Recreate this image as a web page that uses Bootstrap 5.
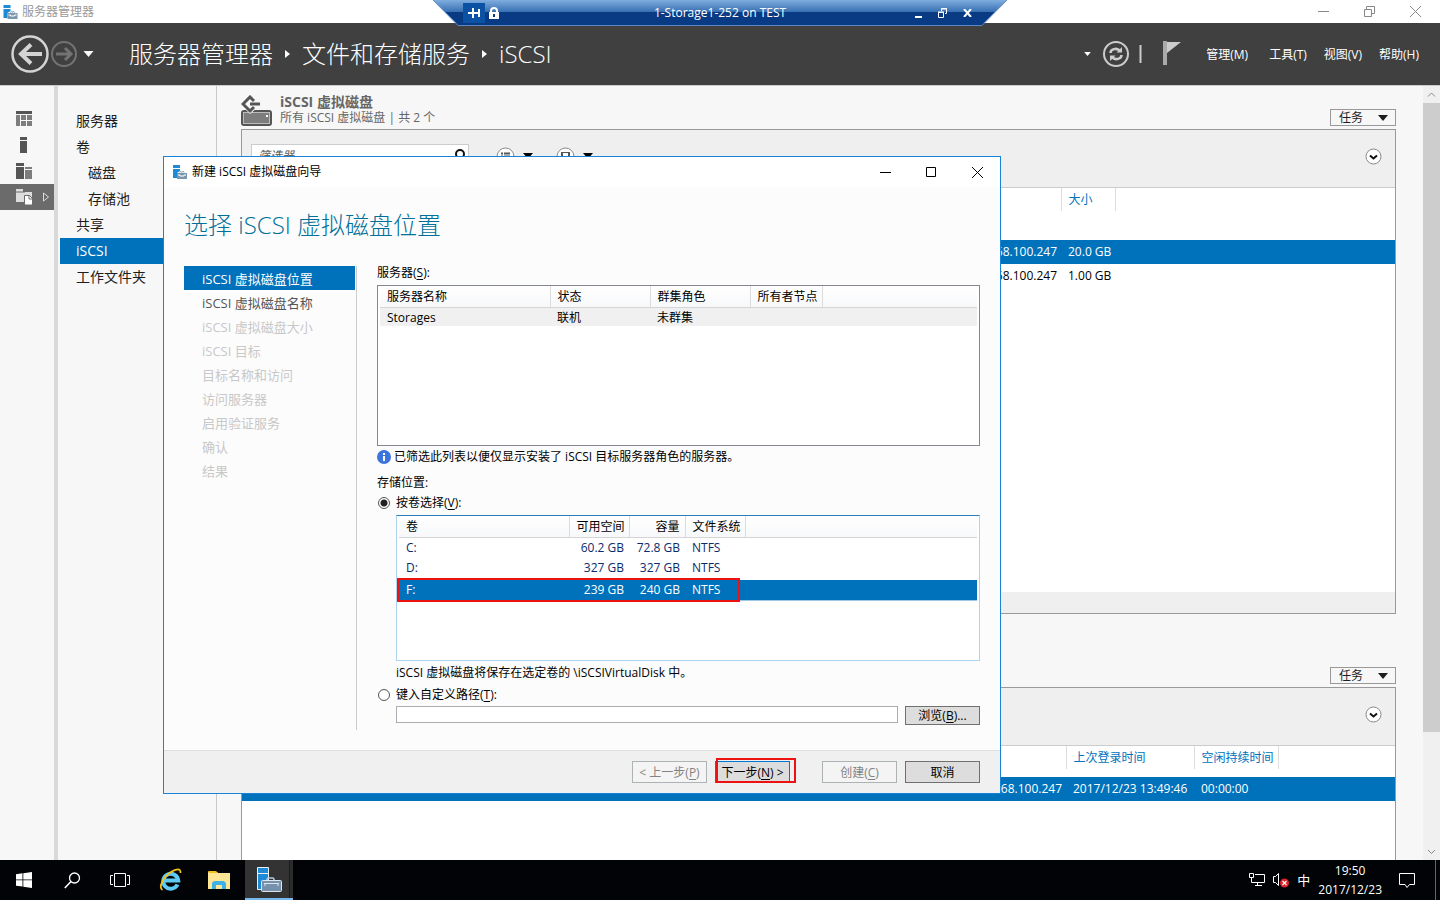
<!DOCTYPE html>
<html lang="zh-CN">
<head>
<meta charset="utf-8">
<meta name="viewport" content="width=device-width, initial-scale=1">
<title>服务器管理器</title>
<link href="https://cdn.jsdelivr.net/npm/bootstrap@5.3.0/dist/css/bootstrap.min.css" rel="stylesheet">
<style>
  :root { --accent: #0072bc; --tile-line: #999; --ink: #1e1e1e; }
  body { font: 12px/16px "Open Sans", "Noto Sans CJK SC", sans-serif; color: #000; background: #f7f7f7; }
  button { font: inherit; color: inherit; padding: 0; border: 0; background: none; border-radius: 0; }
  svg { display: block; flex: none; }
  u { text-underline-offset: 2px; }
  td, th { padding: 0; font-weight: 400; white-space: nowrap; }
  table { table-layout: fixed; width: 100%; }

  .win-btns { gap: 35px; }
  .app-title { height: 23px; background: #fff; color: #999; padding: 0 19px 0 3px; }
  .app-head { height: 62px; background: #404040; color: #fff; padding: 0 21px 0 11px; }
  .crumbs { font-size: 24px; line-height: 32px; font-weight: 300; gap: 11px; margin-left: 35px; }
  .crumbs a { color: #fff; text-decoration: none; }
  .head-rule { margin: 0 20px 0 10px; }
  .menus { gap: 17px; margin-left: 25px; padding-top: 2px; }

  .workspace { border-top: 1px solid #ccc; min-height: 0; overflow: hidden; }
  .rail { width: 58px; border-right: 4px solid #d9d9d9; padding-top: 20px; }
  .rail button { height: 26px; width: 54px; padding-left: 15px; gap: 8px; }
  .rail .current { background: #6b6b6b; }
  .side { width: 159px; padding: 22px 0 0 2px; border-right: 1px solid #c8c8c8; font-size: 14px; }
  .side a { display: block; line-height: 26px; padding-left: 16px; color: var(--ink); text-decoration: none; }
  .side .sub { padding-left: 28px; }
  .side .current { background: var(--accent); color: #fff; }
  .tiles { min-width: 0; padding: 0 27px 0 24px; }
  .tile-head { height: 43px; padding-bottom: 3px; color: #666; }
  .tile-head h2 { font-size: 14px; line-height: 17px; font-weight: 700; margin: 0; }
  .task-btn { width: 66px; height: 17px; border: 1px solid var(--tile-line); color: var(--ink); padding: 0 7px 0 8px; }
  .tile-box { border: 1px solid var(--tile-line); background: #fff; }
  .tile-tools { height: 58px; background: #efefef; border-bottom: 1px solid #ccc; padding: 0 13px 5px 9px; }
  .filter { width: 218px; height: 24px; border: 1px solid #ccc; background: #fff; padding: 0 3px 0 6px; }
  .filter input { font-size: 12px; font-style: italic; border: 0; outline: 0; width: 180px; padding: 0; }
  .filter input::placeholder { color: #555; }
  .tool { gap: 8px; margin-left: 27px; }
  .tool + .tool { margin-left: 23px; }
  .grid-list th { height: 23px; color: var(--accent); padding-left: 7px; border-right: 1px solid #ddd; }
  .grid-list td { height: 24px; padding-left: 7px; }
  .grid-list th:last-child { border-right: 0; }
  .grid-list td:first-child { text-align: right; padding-right: 4px; }
  .grid-list .gap td { height: 29px; }
  .grid-list .gap.short td { height: 8px; }
  .grid-list .picked { background: var(--accent); color: #fff; }
  .tile-one .grid-area { height: 404px; }
  .tile-two { margin-top: 30px; }
  .tile-foot { height: 21px; background: #efefef; }
  .vscroll { width: 17px; background: #f0f0f0; }
  .vscroll .thumb { height: 629px; background: #cdcdcd; }

  .remote-bar { width: 576px; height: 26px; top: 0; left: 50%; transform: translateX(-50%); color: #fff; z-index: 5; }
  .remote-bar > svg { position: absolute; inset: 0; }
  .remote-bar .bar-row { position: relative; height: 25px; padding: 0 36px 0 31px; }
  .remote-bar .host-name { padding-left: 26px; }
  .pin { width: 22px; height: 20px; background: #0b52a4; }

  .wizard { left: 163px; top: 156px; width: 838px; border: 1px solid #1883d7; background: #fcfcfc; z-index: 3; }
  .wiz-title { height: 30px; background: #fff; padding: 0 17px 0 8px; }
  .wizard h1 { font-size: 24px; line-height: 32px; font-weight: 300; color: #00709a; margin: 22px 20px 25px; }
  .wiz-body { padding: 0 20px; margin-bottom: 20px; gap: 20px; }
  .steps { width: 173px; border-right: 1px solid #ccc; padding-right: 1px; font-size: 13px; height: 464px; }
  .steps a { display: block; line-height: 27px; height: 24px; padding-left: 18px; color: #c8c8c8; text-decoration: none; }
  .steps .open { color: #555; }
  .steps .current { background: var(--accent); color: #fff; }
  .pane { min-width: 0; }
  .lbl { line-height: 14px; margin-bottom: 5px; }
  .listbox { border: 1px solid #828790; background: #fff; padding: 0 2px; height: 161px; }
  .listbox.vol { border-color: #abd5ee; border-top-color: #2f7cba; height: 146px; position: relative; }
  .listbox th { height: 21px; padding: 1px 5px 0 7px; border-right: 1px solid #dcdcdc; border-bottom: 1px solid #d5d5d5; background: linear-gradient(#fff, #f7f8fa); }
  .listbox th:last-child { border-right: 0; }
  .listbox td { padding: 0 5px 0 7px; height: 21px; line-height: 18px; }
  .host tbody tr { background: linear-gradient(#fff 1px, #f0f0f0 1px, #f0f0f0 19px, #fff 19px); }
  .vol tbody { color: #0b2a6b; }
  .vol .picked { background: var(--accent); color: #fff; border-top: 1px solid #fff; border-bottom: 1px solid #9cc7e6; }
  .mark-box { position: absolute; border: 2px solid #ed1111; pointer-events: none; }
  .mark-vol { left: 0; top: 62px; width: 343px; height: 24px; }
  .mark-next { left: 1px; top: -3px; width: 80px; height: 25px; }
  .info { height: 21px; gap: 3px; }
  .opt { gap: 6px; height: 16px; }
  .opt input { appearance: none; width: 12px; height: 12px; border: 1px solid #555; border-radius: 50%; background: #fff; margin: 0 0 0 1px; }
  .opt input:checked { background: radial-gradient(circle, #222 0 3px, #fff 4px); }
  .opt-path { margin-top: 6px; }
  .indent { margin-left: 19px; }
  .path-row { gap: 7px; margin-top: 3px; }
  .path-in { height: 17px; border: 1px solid #abadb3; background: #fff; padding: 0 4px; min-width: 0; border-radius: 0; }
  .w-btn { width: 75px; height: 22px; border: 1px solid #707070; background: #ddd; padding-top: 1px; }
  .w-btn.slim { height: 19px; }
  .w-btn:disabled { border-color: #adb2b5; background: #f4f4f4; color: #838383; }
  .w-btn.main { border-color: #0078d7; }
  .wiz-foot { height: 43px; background: #f0f0f0; border-top: 1px solid #dfdfdf; padding: 0 20px; gap: 8px; }

  .taskbar { height: 40px; background: #010306; color: #fff; padding-right: 4px; }
  .taskbar .tb { width: 48px; height: 40px; }
  .taskbar .pinned { margin-left: 3px; }
  .taskbar .tb.active { background: linear-gradient(90deg, #333 44px, #1c1c1c 44px, #1c1c1c 45px, #2b2b2b 45px); border-bottom: 2px solid #76b9ed; margin-left: 2px; }
  .tray { border-right: 1px solid #666; padding-right: 20px; }
  .ime { font-size: 13px; }
  .clock { line-height: 19px; margin: 0 17px 0 8px; }
</style>
</head>
<body class="d-flex flex-column vh-100 overflow-hidden position-relative">

<svg width="0" height="0" class="position-absolute" aria-hidden="true">
  <symbol id="srv" viewBox="0 0 14 14">
    <path d="M0 0h7v3H0zM0 4h7v2L4 8v5H0z" fill="#1e8ad6"/>
    <path d="M4 8h2.500l1-2h3l1 2H14v6H4z" fill="#7a96ac"/><path d="M7.500 8l.5-1h2l.5 1M5 10h2v1h4v-1h2" stroke="#fff" fill="none"/>
  </symbol>
  <symbol id="down" viewBox="0 0 10 6"><path d="M0 0h10L5 6z" fill="currentColor"/></symbol>
  <symbol id="expander" viewBox="0 0 17 17"><circle cx="8.500" cy="8.500" r="7.500" fill="#fff" stroke="#888"/><path d="M5 7.500l3.500 3 3.500-3" fill="none" stroke="#111" stroke-width="2"/></symbol>
</svg>

<div class="remote-bar position-absolute">
  <svg width="576" height="26"><defs><linearGradient id="rb" x2="0" y2="1"><stop stop-color="#7fadde"/><stop offset=".46" stop-color="#3a72b4"/><stop offset=".47" stop-color="#083b84"/><stop offset="1" stop-color="#083b84"/></linearGradient></defs><path d="M1 0h574l-25 25H26z" fill="url(#rb)"/><path d="M1 0l25 25.500h524L575 0" fill="none" stroke="#5d8ac6"/></svg>
  <div class="bar-row d-flex align-items-center">
    <button class="pin d-flex align-items-center justify-content-center" aria-label="固定"><svg width="12" height="12" fill="#fff"><path d="M0 5h4v2H0zM4 1h2v4h4V2h2v8h-2V7H6v4H4z"/></svg></button>
    <svg width="10" height="12" class="ms-1"><path d="M2 6V4a3 3 0 016 0v2" fill="none" stroke="#fff" stroke-width="2"/><path d="M0 5h10v7H0z" fill="#fff"/><path d="M4 7h2v3H4z" fill="#083b84"/></svg>
    <span class="host-name flex-grow-1 text-center">1-Storage1-252 on TEST</span>
    <div class="d-flex align-items-center gap-3">
      <button aria-label="最小化"><svg width="7" height="10"><path d="M0 8h7v2H0z" fill="#fff"/></svg></button>
      <button aria-label="还原"><svg width="9" height="10" fill="none" stroke="#fff"><path d="M3.500 3V.5h5v5H7M3 1h6"/><path d="M.5 4.500h5v5h-5zM0 4h6"/></svg></button>
      <button aria-label="关闭"><svg width="9" height="8"><path d="M1 0l7 8M8 0L1 8" stroke="#fff" stroke-width="2"/></svg></button>
    </div>
  </div>
</div>

<div class="app-title d-flex align-items-center justify-content-between flex-shrink-0">
  <div class="d-flex align-items-center gap-1"><svg width="15" height="14"><use href="#srv"/></svg><span>服务器管理器</span></div>
  <div class="win-btns d-flex align-items-center">
    <button aria-label="最小化"><svg width="11" height="11"><path d="M0 5.500h11" stroke="#888"/></svg></button>
    <button aria-label="还原"><svg width="11" height="11" fill="none" stroke="#888"><path d="M.5 3.500h7v7h-7zM2.500 3V.5h8v7H8"/></svg></button>
    <button aria-label="关闭"><svg width="11" height="11"><path d="M0 0l11 11M11 0L0 11" stroke="#888"/></svg></button>
  </div>
</div>

<header class="app-head d-flex align-items-center flex-shrink-0">
  <button aria-label="后退"><svg width="38" height="38" fill="none"><circle cx="19" cy="19" r="17.500" stroke="#d4d4d4" stroke-width="2.500"/><path d="M31 19H10M20 9.500L10 19l10 9.500" stroke="#d4d4d4" stroke-width="4"/></svg></button>
  <button aria-label="前进"><svg width="30" height="26" fill="none" stroke="#737373"><circle cx="15" cy="13" r="12" stroke-width="2"/><path d="M7 13h15M16 7l6 6-6 6" stroke-width="3"/></svg></button>
  <button class="ms-1" aria-label="历史记录"><svg width="11" height="6" class="text-light"><use href="#down"/></svg></button>
  <nav class="crumbs d-flex align-items-center">
    <a href="#">服务器管理器</a>
    <svg width="7" height="8"><path d="M1 0l5 4-5 4z" fill="#fff"/></svg>
    <a href="#">文件和存储服务</a>
    <svg width="7" height="8"><path d="M1 0l5 4-5 4z" fill="#fff"/></svg>
    <a href="#">iSCSI</a>
  </nav>
  <div class="ms-auto d-flex align-items-center">
    <svg width="7" height="4"><use href="#down"/></svg>
    <button class="ms-2 ps-1" aria-label="刷新"><svg width="26" height="26" fill="none" stroke="#ccc" stroke-width="2"><circle cx="13" cy="13" r="12"/><path d="M7.500 12c0-4 6-5.500 9-2.500M18.500 14c0 4-6 5.500-9 2.500" stroke-width="2.500"/><path d="M19 6v5.500h-5.500zM7 20v-5.500h5.500z" fill="#ccc" stroke="none"/></svg></button>
    <svg width="3" height="18" class="head-rule"><path d="M1.500 0v18" stroke="#ccc" stroke-width="2"/></svg>
    <button class="pb-1" aria-label="通知"><svg width="19" height="25"><path d="M3 1v24" stroke="#aaa" stroke-width="4"/><path d="M5 2h14L5 13z" fill="#ccc"/></svg></button>
    <div class="menus d-flex">
      <button class="me-1">管理(M)</button><button>工具(T)</button><button>视图(V)</button><button>帮助(H)</button>
    </div>
  </div>
</header>

<div class="workspace d-flex flex-grow-1">
  <nav class="rail flex-shrink-0 d-flex flex-column">
    <button class="d-flex align-items-center" aria-label="仪表板"><svg width="17" height="16"><path d="M1 0h16v3H1z" fill="#555"/><path d="M1 4h4v11H1zM6 4h5v5H6zM12 4h5v5h-5zM6 10h5v5H6zM12 10h5v5h-5z" fill="#7d7d7d"/></svg></button>
    <button class="d-flex align-items-center" aria-label="本地服务器"><svg width="17" height="16"><path d="M5 0h7v3H5zM5 4h7v12H5z" fill="#555"/></svg></button>
    <button class="d-flex align-items-center" aria-label="所有服务器"><svg width="17" height="16"><path d="M1 0h8v3H1zM1 4h8v12H1z" fill="#555"/><path d="M10 4h7v2h-7zM10 7h7v9h-7z" fill="#7d7d7d"/></svg></button>
    <button class="current d-flex align-items-center" aria-label="文件和存储服务"><svg width="17" height="16"><path d="M1 0h7v3h9v10H1z" fill="#ddd"/><path d="M1 3h9" stroke="#6b6b6b"/><path d="M9.500 6.500h5l3 3V16h-8z" fill="#fff" stroke="#6b6b6b"/><path d="M14 6v4h3" fill="none" stroke="#6b6b6b"/></svg><svg width="8" height="10" class="ms-auto me-1"><path d="M1.500 1l5 4-5 4z" fill="none" stroke="#ddd"/></svg></button>
  </nav>
  <nav class="side flex-shrink-0">
    <a href="#">服务器</a><a href="#">卷</a><a href="#" class="sub">磁盘</a><a href="#" class="sub">存储池</a><a href="#">共享</a><a href="#" class="current">iSCSI</a><a href="#">工作文件夹</a>
  </nav>
  <main class="tiles flex-grow-1">
    <section class="tile-one">
      <div class="tile-head d-flex justify-content-between align-items-end">
        <div class="d-flex align-items-end gap-2">
          <svg width="31" height="31"><rect x="1" y="16" width="29" height="14" rx="2" fill="#7d7d7d" stroke="#555" stroke-width="2"/><rect x="2.500" y="17.500" width="26" height="11" fill="none" stroke="#bbb"/><path d="M25 20h2v2h-2z" fill="#fff"/><path d="M3 13h13l-7 6z" fill="#f7f7f7"/><path d="M13 6L9 2 2 9l7 7 4-4M9 9h10" fill="none" stroke="#555" stroke-width="3"/></svg>
          <div><h2>iSCSI 虚拟磁盘</h2><div>所有 iSCSI 虚拟磁盘 | 共 2 个</div></div>
        </div>
        <button class="task-btn d-flex align-items-center justify-content-between">任务<svg width="10" height="6"><use href="#down"/></svg></button>
      </div>
      <div class="tile-box">
        <div class="tile-tools d-flex align-items-center">
          <div class="filter d-flex align-items-center justify-content-between"><input type="text" placeholder="筛选器" aria-label="筛选器"><svg width="12" height="14" fill="none" stroke="#111" stroke-width="2"><circle cx="7" cy="5" r="4"/><path d="M4 8l-4 5"/></svg></div>
          <button class="tool d-flex align-items-center" aria-label="分组">
            <svg width="19" height="19"><circle cx="9.500" cy="9.500" r="8.500" fill="#fff" stroke="#888"/><path d="M5 6.500h2M8 6.500h6M5 9.500h2M8 9.500h6M5 12.500h2M8 12.500h6" stroke="#555" stroke-width="2"/></svg>
            <svg width="10" height="6"><use href="#down"/></svg>
          </button>
          <button class="tool d-flex align-items-center" aria-label="保存查询">
            <svg width="19" height="19"><circle cx="9.500" cy="9.500" r="8.500" fill="#fff" stroke="#888"/><path d="M5 5h9v9H5z" fill="#555"/><path d="M7 6h5v3H7z" fill="#fff"/></svg>
            <svg width="10" height="6"><use href="#down"/></svg>
          </button>
          <button class="ms-auto" aria-label="展开"><svg width="17" height="17"><use href="#expander"/></svg></button>
        </div>
        <div class="grid-area">
          <table class="grid-list">
            <colgroup><col style="width:819px"><col style="width:54px"><col></colgroup>
            <thead><tr><th></th><th>大小</th><th></th></tr></thead>
            <tbody>
              <tr class="gap"><td></td><td></td><td></td></tr>
              <tr class="picked"><td>192.168.100.247</td><td colspan="2">20.0 GB</td></tr>
              <tr><td>192.168.100.247</td><td colspan="2">1.00 GB</td></tr>
            </tbody>
          </table>
        </div>
        <div class="tile-foot"></div>
      </div>
    </section>
    <section class="tile-two">
      <div class="tile-head d-flex justify-content-end align-items-end">
        <button class="task-btn d-flex align-items-center justify-content-between">任务<svg width="10" height="6"><use href="#down"/></svg></button>
      </div>
      <div class="tile-box vh-100">
        <div class="tile-tools d-flex align-items-center justify-content-end">
          <button aria-label="展开"><svg width="17" height="17"><use href="#expander"/></svg></button>
        </div>
        <table class="grid-list">
          <colgroup><col style="width:824px"><col style="width:128px"><col style="width:84px"><col></colgroup>
          <thead><tr><th></th><th>上次登录时间</th><th>空闲持续时间</th><th></th></tr></thead>
          <tbody>
            <tr class="gap short"><td></td><td></td><td></td><td></td></tr>
            <tr class="picked"><td>192.168.100.247</td><td>2017/12/23 13:49:46</td><td>00:00:00</td><td></td></tr>
          </tbody>
        </table>
      </div>
    </section>
  </main>
  <div class="vscroll flex-shrink-0 d-flex flex-column align-items-center">
    <svg width="17" height="17" fill="none" stroke="#888"><path d="M5 10.500L8.500 7l3.500 3.500"/></svg>
    <div class="thumb w-100"></div>
    <svg width="17" height="17" class="mt-auto" fill="none" stroke="#888"><path d="M5 7l3.500 3.500L12 7"/></svg>
  </div>
</div>

<div class="wizard position-absolute" role="dialog" aria-labelledby="wiz-name">
  <div class="wiz-title d-flex align-items-center justify-content-between">
    <div class="d-flex align-items-center gap-1"><svg width="16" height="14"><use href="#srv"/></svg><span id="wiz-name">新建 iSCSI 虚拟磁盘向导</span></div>
    <div class="win-btns d-flex align-items-center">
      <button aria-label="最小化"><svg width="11" height="11"><path d="M0 5.500h11" stroke="#000"/></svg></button>
      <button aria-label="最大化"><svg width="11" height="11"><path d="M.5.5h9v9h-9z" fill="none" stroke="#000"/></svg></button>
      <button aria-label="关闭"><svg width="11" height="11"><path d="M0 0l11 11M11 0L0 11" stroke="#000"/></svg></button>
    </div>
  </div>
  <h1>选择 iSCSI 虚拟磁盘位置</h1>
  <div class="wiz-body d-flex">
    <nav class="steps flex-shrink-0">
      <a href="#" class="current">iSCSI 虚拟磁盘位置</a><a href="#" class="open">iSCSI 虚拟磁盘名称</a><a href="#">iSCSI 虚拟磁盘大小</a><a href="#">iSCSI 目标</a><a href="#">目标名称和访问</a><a href="#">访问服务器</a><a href="#">启用验证服务</a><a href="#">确认</a><a href="#">结果</a>
    </nav>
    <div class="pane flex-grow-1">
      <div class="lbl">服务器(<u>S</u>):</div>
      <div class="listbox host">
        <table>
          <colgroup><col style="width:170px"><col style="width:100px"><col style="width:100px"><col style="width:72px"><col></colgroup>
          <thead><tr><th>服务器名称</th><th>状态</th><th>群集角色</th><th>所有者节点</th><th></th></tr></thead>
          <tbody><tr><td>Storages</td><td>联机</td><td>未群集</td><td></td><td></td></tr></tbody>
        </table>
      </div>
      <div class="info d-flex align-items-center"><svg width="14" height="14"><circle cx="7" cy="7" r="7" fill="#3b74dc"/><path d="M6 3h2v2H6zM6 6h2v5H6z" fill="#fff"/></svg><span>已筛选此列表以便仅显示安装了 iSCSI 目标服务器角色的服务器。</span></div>
      <div class="mt-2">存储位置:</div>
      <div class="opt d-flex align-items-center mt-1"><input type="radio" name="where" id="by-vol" checked><label for="by-vol">按卷选择(<u>V</u>):</label></div>
      <div class="indent mt-1">
        <div class="listbox vol">
          <table>
            <colgroup><col style="width:170px"><col style="width:60px"><col style="width:56px"><col style="width:60px"><col></colgroup>
            <thead><tr><th>卷</th><th class="text-end">可用空间</th><th class="text-end">容量</th><th>文件系统</th><th></th></tr></thead>
            <tbody>
              <tr><td>C:</td><td class="text-end">60.2 GB</td><td class="text-end">72.8 GB</td><td>NTFS</td><td></td></tr>
              <tr><td>D:</td><td class="text-end">327 GB</td><td class="text-end">327 GB</td><td>NTFS</td><td></td></tr>
              <tr class="picked"><td>F:</td><td class="text-end">239 GB</td><td class="text-end">240 GB</td><td>NTFS</td><td></td></tr>
            </tbody>
          </table>
          <div class="mark-box mark-vol"></div>
        </div>
        <div class="pt-1">iSCSI 虚拟磁盘将保存在选定卷的 \iSCSIVirtualDisk 中。</div>
      </div>
      <div class="opt opt-path d-flex align-items-center"><input type="radio" name="where" id="by-path"><label for="by-path">键入自定义路径(<u>T</u>):</label></div>
      <div class="indent path-row d-flex"><input type="text" class="path-in flex-grow-1" aria-label="自定义路径"><button class="w-btn slim">浏览(<u>B</u>)...</button></div>
    </div>
  </div>
  <div class="wiz-foot d-flex align-items-center justify-content-end">
    <button class="w-btn" disabled>&lt; 上一步(<u>P</u>)</button>
    <div class="position-relative me-4"><button class="w-btn main d-block">下一步(<u>N</u>) &gt;</button><div class="mark-box mark-next"></div></div>
    <button class="w-btn" disabled>创建(<u>C</u>)</button>
    <button class="w-btn">取消</button>
  </div>
</div>

<footer class="taskbar d-flex align-items-center flex-shrink-0">
  <button class="tb d-flex align-items-center justify-content-center" aria-label="开始"><svg width="16" height="16" fill="#fff"><path d="M0 2.200L6.500 1.300v6.200H0zM7.300 1.200L16 0v7.500H7.300zM0 8.300h6.500v6.300L0 13.700zM7.300 8.300H16V16l-8.700-1.200z"/></svg></button>
  <button class="tb d-flex align-items-center justify-content-center" aria-label="搜索"><svg width="17" height="17" fill="none" stroke="#fff"><circle cx="10.500" cy="6" r="5" stroke-width="1.300"/><path d="M7 9.500L.8 16" stroke-width="1.600"/></svg></button>
  <button class="tb d-flex align-items-center justify-content-center" aria-label="任务视图"><svg width="20" height="14" fill="none" stroke="#fff"><path d="M4.500.5h11v13h-11zM3 2.500H.5v9H3M17 2.500h2.500v9H17"/></svg></button>
  <button class="tb pinned d-flex align-items-center justify-content-center" aria-label="Internet Explorer"><svg width="24" height="24" fill="none"><path d="M18.500 16.500a7.500 7.500 0 11.700-4H6" stroke="#5ecbf7" stroke-width="4"/><path d="M3.500 22C-1 20 4 9 12 4c5-3.500 10-4 9.500 1" stroke="#f2c21a" stroke-width="1.800"/></svg></button>
  <button class="tb d-flex align-items-center justify-content-center" aria-label="文件资源管理器"><svg width="22" height="18"><path d="M0 1h9l1 1h12v16H0z" fill="#ffe694"/><path d="M0 0h8l2 2H1z" fill="#f3c21b"/><path d="M4 18v-6l2-2h10l2 2v6h-4v-4H8v4z" fill="#3db2e6"/></svg></button>
  <button class="tb active d-flex align-items-center justify-content-center" aria-label="服务器管理器"><svg width="25" height="25"><path d="M.5.5h11v22H.5z" fill="#1e8ad6" stroke="#e8f1f8"/><path d="M0 6.500h12" stroke="#e8f1f8"/><path d="M10 13.500V12l1-1h5l1 1v1.500" fill="none" stroke="#b7c8d8" stroke-width="1.500"/><rect x="4.500" y="13.500" width="20" height="11" rx="1" fill="#7691ab" stroke="#dce5ec"/><path d="M7 16.500h15M8 16v3M21 16v3" stroke="#dce5ec"/></svg></button>
  <div class="tray ms-auto d-flex align-items-center h-100">
    <svg width="16" height="14" fill="none" stroke="#fff"><path d="M6 1.500h9.500v8H2.500V5M6 12.500h7M8.500 10v3M.5.500h4v4h-4z"/></svg>
    <svg width="16" height="16" class="mx-2"><path d="M.5 4.500h2l3-3v12l-3-3h-2z" fill="none" stroke="#fff"/><circle cx="11.500" cy="11" r="4.500" fill="#d9222a"/><path d="M9.500 9l4 4M13.500 9l-4 4" stroke="#fff" stroke-width="1.200"/></svg>
    <span class="ime">中</span>
    <div class="clock text-center">19:50<br>2017/12/23</div>
    <button aria-label="操作中心"><svg width="16" height="17" fill="none" stroke="#fff"><path d="M.5 1.500h15v11h-5L8 15.500l-2-3H.5z"/></svg></button>
  </div>
</footer>

<script src="https://cdn.jsdelivr.net/npm/bootstrap@5.3.0/dist/js/bootstrap.bundle.min.js"></script>
</body>
</html>
